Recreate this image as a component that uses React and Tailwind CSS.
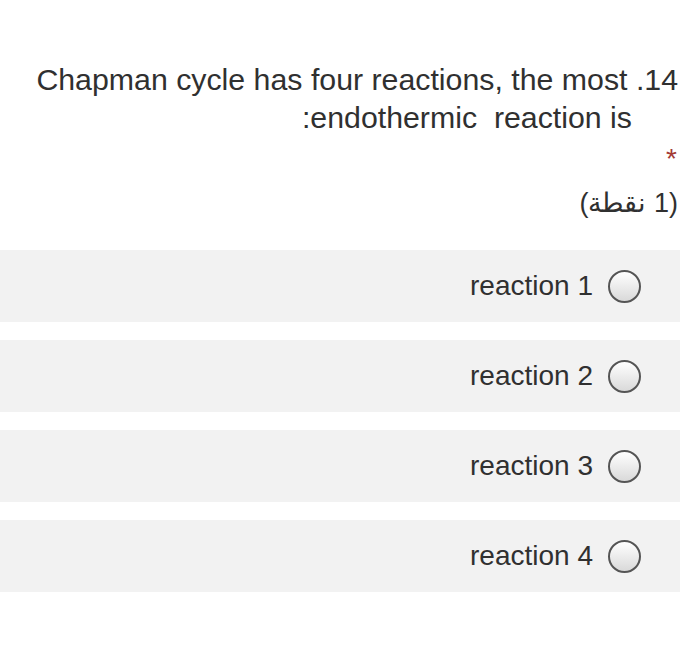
export default function App() {
  const options = ['reaction 1', 'reaction 2', 'reaction 3', 'reaction 4']

  return (
    <div className="w-[700px] h-[656px] bg-white font-['Liberation_Sans',Arial,sans-serif] text-[#303030]">
      {/* Question */}
      <div className="flex flex-col items-end pt-[61px] pr-[22px]">
        <div className="text-[30.3px] leading-[38px] whitespace-pre">Chapman cycle has four reactions, the most .14</div>
        <div className="text-[30.3px] leading-[38px] whitespace-pre mr-[46px]">:endothermic  reaction is</div>
        <div className="text-[#a33a35] text-[28px] leading-[20px] mt-[12px] mr-[1px]">*</div>
        <div className="text-[27px] leading-[30px] mt-[19px]" dir="rtl">
          (1 نقطة)
        </div>
      </div>

      {/* Options */}
      <div className="flex flex-col gap-[18px] mt-[32px] w-[680px]">
        {options.map((label) => (
          <div key={label} className="h-[72px] bg-[#f2f2f2] flex items-center justify-end pr-[39px]">
            <span className="text-[28px] mr-[15px]">{label}</span>
            <span className="w-[33px] h-[33px] rounded-full border-2 border-[#555] bg-gradient-to-b from-white to-[#d9d9d9]" />
          </div>
        ))}
      </div>
    </div>
  )
}
